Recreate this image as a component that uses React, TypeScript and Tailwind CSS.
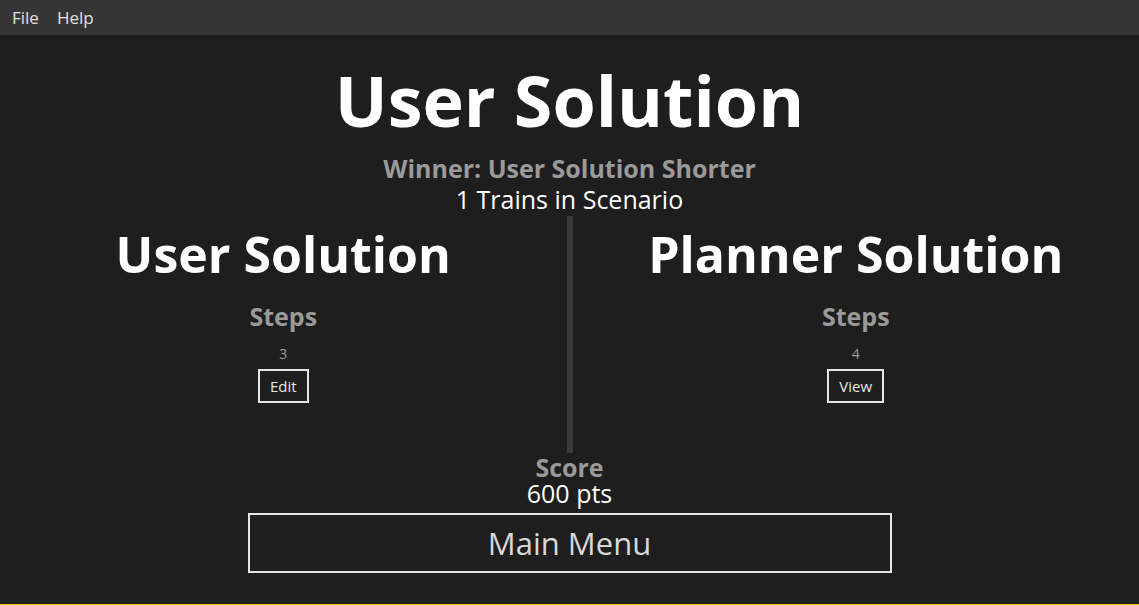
import React from 'react';

const font = { fontFamily: '"Open Sans", "Noto Sans", sans-serif' };

const SolutionColumn: React.FC<{ title: string; steps: number; action: string }> = ({ title, steps, action }) => {
  return (
    <div className="flex-1 flex flex-col items-center pt-[10px]">
      <h2 className="text-[50px] leading-[56px] font-bold text-white">{title}</h2>
      <div className="mt-[18px] text-[25px] leading-[32px] font-bold text-[#9a9a9a]">Steps</div>
      <div className="mt-[12px] text-[14px] leading-[20px] text-[#9a9a9a]">{steps}</div>
      <button className="mt-[5px] h-[34px] px-[10px] border-2 border-[#e6e6e6] text-[15px] text-[#e6e6e6]">
        {action}
      </button>
    </div>
  );
};

export default function App() {
  return (
    <div className="w-[1139px] h-[605px] bg-[#1e1e1e] flex flex-col overflow-hidden" style={font}>
      <div className="h-[35px] bg-[#353535] flex items-center text-[17px] text-[#e0e0e0] shrink-0">
        <span className="ml-[12px]">File</span>
        <span className="ml-[18px]">Help</span>
      </div>

      <div className="flex-1 flex flex-col items-center">
        <h1 className="mt-[25px] text-[70px] leading-[80px] font-bold text-white">User Solution</h1>
        <div className="mt-[13px] text-[25px] leading-[30px] font-bold text-[#9a9a9a]">Winner: User Solution Shorter</div>
        <div className="text-[25px] leading-[32px] text-white">1 Trains in Scenario</div>

        <div className="mt-[1px] w-full h-[237px] flex">
          <SolutionColumn title="User Solution" steps={3} action="Edit" />
          <div className="w-[6px] bg-[#3a3a3a]" />
          <SolutionColumn title="Planner Solution" steps={4} action="View" />
        </div>

        <div className="mt-[2px] text-[25px] leading-[24px] font-bold text-[#9a9a9a]">Score</div>
        <div className="mt-[1px] text-[25px] leading-[26px] text-white">600 pts</div>

        <button className="mt-[7px] w-[644px] h-[60px] border-2 border-[#e6e6e6] text-[31px] text-[#d8d8d8] flex items-center justify-center">
          Main Menu
        </button>
      </div>

      <div className="h-[1px] bg-[#f5c000] shrink-0" />
    </div>
  );
}
